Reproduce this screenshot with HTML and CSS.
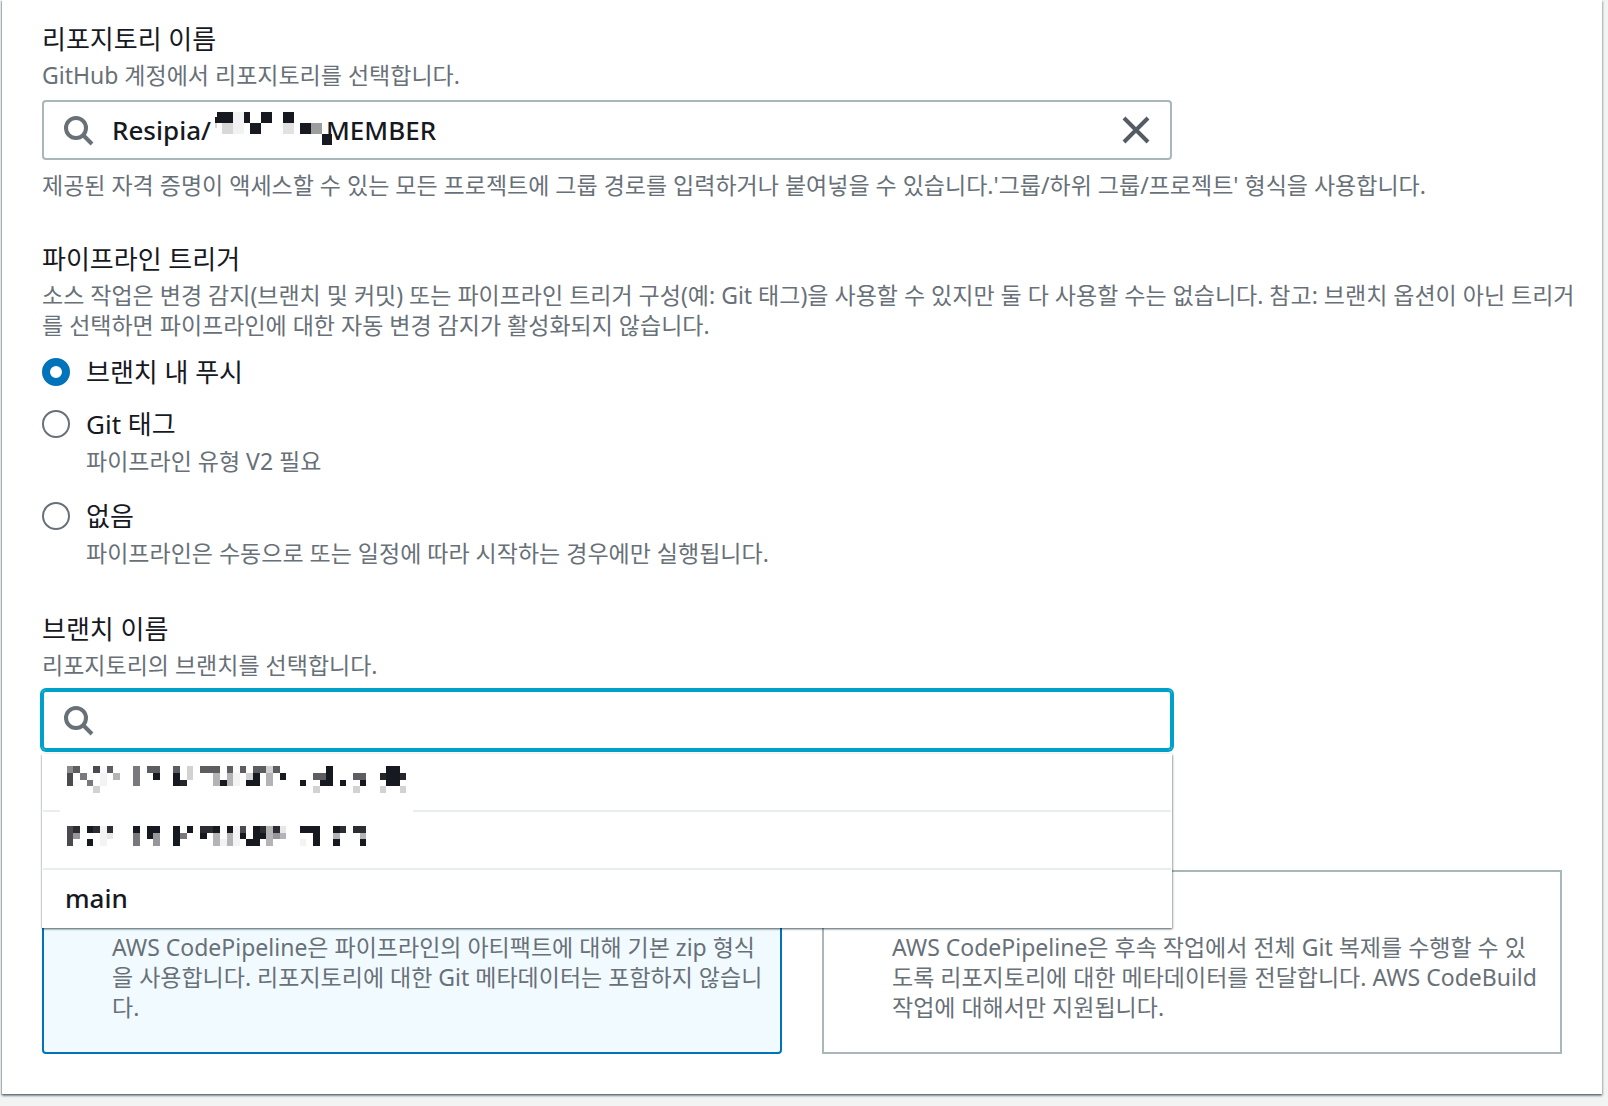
FILE: index.html
```html
<!DOCTYPE html>
<html lang="ko">
  <head>
    <meta charset="UTF-8" />
    <title>소스 스테이지 추가</title>
    <link rel="stylesheet" href="styles.css">
  </head>
  <body>
    <form class="panel">
      <div class="field">
        <label class="field-label" for="repository">리포지토리 이름</label>
        <p class="description">GitHub 계정에서 리포지토리를 선택합니다.</p>
        <div class="search-box">
          <svg class="search-icon" viewBox="0 0 16 16"><circle cx="7" cy="7" r="5" /><path d="M15 15l-4.5-4.5" /></svg>
          <input type="text" id="repository" name="repository" value="Resipia/                 MEMBER" />
          <svg class="masked-name" viewBox="0 0 351 99" shape-rendering="crispEdges">
            <path fill="#16191f" d="M0 15h5v18H0zM5 0h49v33H5zM87 0h18v33H87zM105 33h33v33h-33zM138 0h33v33h-33zM204 0h33v33h-33zM255 33h33v33h-33zM321 66h30v33h-30z" />
            <path fill="#d8d8d8" d="M0 33h5v15H0zM21 33h33v33H21z" />
            <path fill="#f2f2f2" d="M54 0h33v66H54z" />
            <path fill="#e2e2e2" d="M204 33h33v33h-33z" />
            <path fill="#9d9d9f" d="M288 33h33v33h-33z" />
          </svg>
          <button type="button" class="clear-button" aria-label="지우기">
            <svg viewBox="0 0 32 32"><path d="M4 4l24 24M28 4L4 28" /></svg>
          </button>
        </div>
        <p class="description hint">제공된 자격 증명이 액세스할 수 있는 모든 프로젝트에 그룹 경로를 입력하거나 붙여넣을 수 있습니다.'그룹/하위 그룹/프로젝트' 형식을 사용합니다.</p>
      </div>

      <div class="field" role="radiogroup" aria-labelledby="trigger-label">
        <div class="field-label" id="trigger-label">파이프라인 트리거</div>
        <p class="description wide">소스 작업은 변경 감지(브랜치 및 커밋) 또는 파이프라인 트리거 구성(예: Git 태그)을 사용할 수 있지만 둘 다 사용할 수는 없습니다. 참고: 브랜치 옵션이 아닌 트리거<br>를 선택하면 파이프라인에 대한 자동 변경 감지가 활성화되지 않습니다.</p>
        <div class="radio-list">
          <div class="radio-row">
            <input type="radio" id="push" name="trigger" checked />
            <label for="push">브랜치 내 푸시</label>
          </div>
          <div class="radio-row">
            <input type="radio" id="tag" name="trigger" />
            <label for="tag">Git 태그 <span class="description">파이프라인 유형 V2 필요</span></label>
          </div>
          <div class="radio-row">
            <input type="radio" id="none" name="trigger" />
            <label for="none">없음 <span class="description">파이프라인은 수동으로 또는 일정에 따라 시작하는 경우에만 실행됩니다.</span></label>
          </div>
        </div>
      </div>

      <div class="field">
        <label class="field-label" for="branch">브랜치 이름</label>
        <p class="description">리포지토리의 브랜치를 선택합니다.</p>
        <div class="search-box focused">
          <svg class="search-icon" viewBox="0 0 16 16"><circle cx="7" cy="7" r="5" /><path d="M15 15l-4.5-4.5" /></svg>
          <input type="text" id="branch" name="branch" />
          <ul class="menu" role="listbox">
            <li class="masked-option" role="option">
              <svg class="mosaic mosaic-tall" viewBox="-1 0 53 7" shape-rendering="crispEdges">
                <path fill="#16191f" d="M39 0h1v3h-2v-1h1zM48 0h2v3h-2zM13 1h1v1h-1zM16 1h1v2h-1zM28 1h1v2h-2v-1h1zM32 1h1v1h-1zM23 2h1v1h-1zM35 2h1v1h-1zM41 2h1v1h-1zM44 2h1v1h-1z" />
                <path fill="#25262b" d="M47 1h1v1h-1zM50 1h1v1h-1zM17 2h1v1h-1z" />
                <path fill="#4a4a4f" d="M0 1h1v2H0zM4 0h1v1H4z" />
                <path fill="#5d5d62" d="M1 0h1v1H1zM6 0h1v1H6zM12 0h2v1h-2zM16 0h1v1h-1zM20 0h3v1h-3zM24 0h1v1h-1zM26 0h1v1h-1zM28 0h2v1h-2zM31 0h1v1h-1zM37 1h2v1h-2zM43 1h2v1h-2z" />
                <path fill="#78787d" d="M10 0h1v3h-1zM2 1h1v1H2zM3 2h1v1H3z" />
                <path fill="#8b8b8f" d="M0 0h1v1H0z" />
                <path fill="#b4b4b6" d="M7 1h1v1H7zM22 1h1v2h-1zM24 1h1v2h-1zM30 1h1v2h-1z" />
                <path fill="#d2d2d3" d="M18 0h1v2h-1zM27 1h1v1h-1zM30 0h1v1h-1zM4 3h1v1H4zM37 3h1v1h-1zM43 3h1v1h-1zM47 3h1v1h-1zM50 3h1v1h-1z" />
                <path fill="#f3f3f3" d="M5 1h1v2H5zM25 1h1v2h-1z" />
                <path fill="#fafafa" d="M5 0h1v1H5zM25 0h1v1h-1zM3 1h1v1H3zM1 2h1v1H1z" />
              </svg>
            </li>
            <li class="masked-option" role="option">
              <svg class="mosaic" viewBox="-1 0 53 3" shape-rendering="crispEdges">
                <path fill="#16191f" d="M3 0h1v1H3zM10 0h1v1h-1zM12 0h2v1h-1v1h-1zM16 0h1v3h-1zM18 0h1v1h-1zM22 0h1v1h-1zM24 0h1v1h-1zM28 0h1v1h1v1h-1v1h-2v-1h1zM35 0h3v3h-1v-2h-2zM40 0h1v1h-1zM20 1h1v1h-1zM26 1h1v1h-1zM3 2h1v1H3zM40 2h1v1h-1zM44 2h1v1h-1z" />
                <path fill="#2c2d33" d="M1 0h1v1H1zM4 0h1v1H4zM6 0h1v1H6zM20 0h2v1h-2zM29 0h1v1h-1zM31 0h1v1h-1zM41 0h1v1h-1zM43 0h2v1h-2z" />
                <path fill="#4a4a4f" d="M0 0h1v3H0zM26 0h1v1h-1z" />
                <path fill="#78787d" d="M10 1h1v2h-1zM17 1h1v1h-1z" />
                <path fill="#97979b" d="M1 1h1v1H1zM13 1h1v2h-1zM31 1h1v1h-1z" />
                <path fill="#b4b4b6" d="M22 1h1v2h-1zM24 1h1v2h-1zM30 0h1v3h-1zM32 1h1v1h-1zM40 1h1v1h-1zM44 1h1v1h-1z" />
                <path fill="#e7e7e7" d="M32 0h1v1h-1zM6 1h1v1H6z" />
                <path fill="#f3f3f3" d="M5 0h1v3H5zM25 0h1v3h-1zM23 2h1v1h-1zM35 2h1v1h-1z" />
              </svg>
            </li>
            <li role="option">main</li>
          </ul>
        </div>
      </div>

      <div class="cards">
        <label class="card selected">
          <input type="radio" name="format" checked />
          <span class="description">AWS CodePipeline은 파이프라인의 아티팩트에 대해 기본 zip 형식<br>을 사용합니다. 리포지토리에 대한 Git 메타데이터는 포함하지 않습니<br>다.</span>
        </label>
        <label class="card">
          <input type="radio" name="format" />
          <span class="description">AWS CodePipeline은 후속 작업에서 전체 Git 복제를 수행할 수 있<br>도록 리포지토리에 대한 메타데이터를 전달합니다. AWS CodeBuild<br>작업에 대해서만 지원됩니다.</span>
        </label>
      </div>
    </form>
  </body>
</html>
```
FILE: styles.css
```css
* {
  box-sizing: border-box;
}

body {
  margin: 0;
  background: #f2f3f3;
  color: #16191f;
  font-family: "Noto Sans", "Noto Sans CJK KR", sans-serif;
  font-size: 26px;
  line-height: 44px;
}

.panel {
  margin: 0 6px 12px 2px;
  padding: 18px 40px 40px;
  background: #fff;
  box-shadow: 0 2px 2px rgba(0, 28, 36, 0.4), 1px 1px 2px rgba(0, 28, 36, 0.2),
    -1px 1px 1px rgba(0, 28, 36, 0.2);
}

.field {
  margin-bottom: 40px;
}

.field-label {
  display: block;
  line-height: 42px;
}

.description {
  display: block;
  margin: 0;
  color: #687078;
  font-size: 23px;
  line-height: 30px;
}

.hint {
  margin: 10px 0 -2px;
}

.wide {
  margin-right: -24px;
}

/* Ô tìm kiếm */
.search-box {
  position: relative;
  display: flex;
  align-items: center;
  width: calc(75% - 10px);
  height: 60px;
  margin-top: 10px;
  padding: 0 18px;
  border: 2px solid #aab7b8;
  border-radius: 4px;
  font-weight: 500;
}

.search-box.focused {
  border-color: #00a1c9;
  box-shadow: 0 0 0 2px #00a1c9;
}

.search-box input {
  flex: 1;
  min-width: 0;
  margin-left: 18px;
  padding: 0;
  border: none;
  outline: none;
  background: none;
  color: inherit;
  font: inherit;
}

.search-icon {
  width: 32px;
  height: 32px;
  fill: none;
  stroke: #687078;
  stroke-width: 2;
}

.masked-name {
  position: absolute;
  left: 171px;
  top: 10px;
  width: 117px;
  height: 33px;
}

.clear-button {
  display: flex;
  padding: 0;
  border: none;
  background: none;
  cursor: pointer;
}

.clear-button svg {
  width: 32px;
  height: 32px;
  fill: none;
  stroke: #545b64;
  stroke-width: 4;
}

/* Danh sách nhánh */
.menu {
  position: absolute;
  z-index: 1;
  top: 62px;
  left: -2px;
  right: -2px;
  margin: 0;
  padding: 0 1px;
  background: #fff;
  box-shadow: 0 1px 2px rgba(0, 28, 36, 0.6), 1px 1px 2px rgba(0, 28, 36, 0.2);
  list-style: none;
}

.menu li {
  height: 58px;
  padding: 6px 22px;
  border-bottom: 2px solid #eaeded;
}

.menu li:last-child {
  border-bottom: none;
}

.menu .masked-option {
  padding: 12px 17px;
}

.menu .masked-option + .masked-option {
  padding-top: 14px;
}

.mosaic {
  display: block;
  width: 353px;
  height: 20px;
}

.mosaic-tall {
  height: 47px;
  background: #fff;
}

/* Nút radio */
.radio-list {
  display: grid;
  gap: 18px;
  margin-top: 10px;
}

.radio-row {
  display: flex;
  gap: 16px;
}

.radio-row:first-child {
  margin-bottom: -10px;
}

.radio-row input,
.card input {
  flex: none;
  appearance: none;
  width: 28px;
  height: 28px;
  margin: 8px 0;
  border: 2px solid #687078;
  border-radius: 50%;
  background: #fff;
}

.radio-row input:checked,
.card input:checked {
  border: 8px solid #0073bb;
}

.cards {
  display: grid;
  grid-template-columns: 1fr 1fr;
  gap: 40px;
  margin-top: 120px;
}

.card {
  display: flex;
  gap: 16px;
  padding: 8px 8px 30px 24px;
  border: 2px solid #aab7b8;
}

.card .description {
  margin-top: 52px;
}

.card.selected {
  border-color: #0073bb;
  border-radius: 4px;
  background: #f1faff;
}
```
